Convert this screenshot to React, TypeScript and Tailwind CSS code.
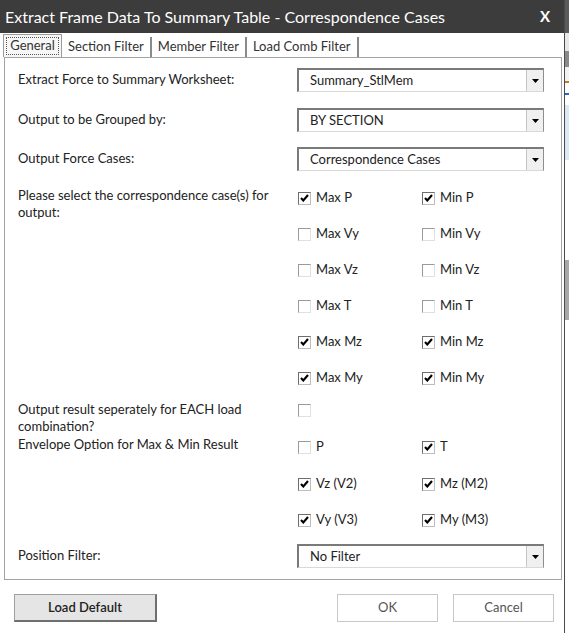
import React from "react";

const font = { fontFamily: "Lato, 'Open Sans', sans-serif" };

function Combo({ value }: { value: string }) {
  return (
    <div className="flex h-[24px] w-[247px] border border-[#8e8e8e] border-t-2 border-l-2 border-t-[#7a7a7a] border-l-[#7a7a7a] border-b-[#d9d9d9] bg-white">
      <div className="flex flex-1 items-center pl-[11px] text-[13px] text-[#222]">{value}</div>
      <div className="flex w-[17px] items-center justify-center border-l border-[#c6c6c6] bg-[#f0f0f0]">
        <svg width="7" height="4" viewBox="0 0 7 4">
          <path d="M0 0h7L3.5 4z" fill="#000" />
        </svg>
      </div>
    </div>
  );
}

function Check({ checked, label }: { checked: boolean; label?: string }) {
  return (
    <div className="flex items-center gap-[5px]">
      <div
        className={`flex h-[13px] w-[13px] items-center justify-center border bg-white ${
          checked
            ? "border-t-[#6e6e6e] border-l-[#6e6e6e] border-b-[#bdbdbd] border-r-[#bdbdbd]"
            : "border-t-[#9a9a9a] border-l-[#9a9a9a] border-b-[#e0e0e0] border-r-[#e0e0e0]"
        }`}
      >
        {checked && (
          <svg width="9" height="8" viewBox="0 0 9 8">
            <path d="M1 4l2.3 2.5L8 1" stroke="#000" strokeWidth="2.1" fill="none" />
          </svg>
        )}
      </div>
      {label && <span className="text-[13px] text-[#222]">{label}</span>}
    </div>
  );
}

function CheckRow({ a, b, h = "h-[36px]" }: { a: [boolean, string]; b: [boolean, string]; h?: string }) {
  return (
    <div className={`flex items-center ${h}`}>
      <div className="w-[125px] pl-[1px]">
        <Check checked={a[0]} label={a[1]} />
      </div>
      <Check checked={b[0]} label={b[1]} />
    </div>
  );
}

const cases: [[boolean, string], [boolean, string]][] = [
  [[true, "Max P"], [true, "Min P"]],
  [[false, "Max Vy"], [false, "Min Vy"]],
  [[false, "Max Vz"], [false, "Min Vz"]],
  [[false, "Max T"], [false, "Min T"]],
  [[true, "Max Mz"], [true, "Min Mz"]],
  [[true, "Max My"], [true, "Min My"]]
];

const tabs = ["Section Filter", "Member Filter", "Load Comb Filter"];

export default function App() {
  return (
    <div className="flex h-[633px] w-[569px] overflow-hidden bg-white" style={font}>
      <div className="flex w-[565px] flex-col border-r border-[#4a4a4a] bg-white">
        {/* title bar */}
        <div className="flex h-[33px] items-center justify-between bg-[#3c3c3c] pl-[5px] pr-[14px] text-white">
          <span className="text-[16px]">Extract Frame Data To Summary Table - Correspondence Cases</span>
          <span className="text-[15px] font-bold">X</span>
        </div>

        {/* tabs */}
        <div className="flex h-[24px] items-end pl-[3px] text-[13px] text-[#333]">
          <div className="flex h-[23px] w-[59px] items-center justify-center border border-[#9c9c9c] border-b-0 bg-[#f7f7f7] p-[2px]">
            <div className="flex h-full w-full items-center justify-center border border-dotted border-[#555]">
              General
            </div>
          </div>
          {tabs.map((t) => (
            <div key={t} className="flex h-[20px] items-center border-r-2 border-[#8a8a8a] px-[6px]">
              {t}
            </div>
          ))}
        </div>

        {/* panel */}
        <div className="ml-[4px] mr-[2px] flex h-[523px] flex-col border border-[#a3a3a3] pl-[13px] pt-[10px] text-[13px] text-[#222]">
          <div className="flex h-[24px] items-center">
            <div className="w-[279px]">Extract Force to Summary Worksheet:</div>
            <Combo value="Summary_StlMem" />
          </div>
          <div className="mt-[16px] flex h-[24px] items-center">
            <div className="w-[279px]">Output to be Grouped by:</div>
            <Combo value="BY SECTION" />
          </div>
          <div className="mt-[15px] flex h-[24px] items-center">
            <div className="w-[279px]">Output Force Cases:</div>
            <Combo value="Correspondence Cases" />
          </div>

          <div className="mt-[9px] flex">
            <div className="w-[279px] pt-[7px] leading-[17px]">
              Please select the correspondence case(s) for
              <br />
              output:
            </div>
            <div className="flex flex-col">
              {cases.map((r, i) => (
                <CheckRow key={i} a={r[0]} b={r[1]} />
              ))}
            </div>
          </div>

          <div className="mt-[5px] flex">
            <div className="w-[279px] leading-[17px]">
              Output result seperately for EACH load
              <br />
              combination?
            </div>
            <div className="flex h-[18px] items-center pl-[1px]">
              <Check checked={false} />
            </div>
          </div>

          <div className="mt-[1px] flex">
            <div className="w-[279px] leading-[17px]">Envelope Option for Max &amp; Min Result</div>
            <div className="flex flex-col">
              <div className="mt-[1px]">
                <CheckRow h="h-[20px]" a={[false, "P"]} b={[true, "T"]} />
              </div>
              <div className="mt-[9px]">
                <CheckRow a={[true, "Vz (V2)"]} b={[true, "Mz (M2)"]} />
                <CheckRow a={[true, "Vy (V3)"]} b={[true, "My (M3)"]} />
              </div>
            </div>
          </div>

          <div className="mt-[6px] flex h-[24px] items-center">
            <div className="w-[279px]">Position Filter:</div>
            <Combo value="No Filter" />
          </div>
        </div>

        {/* buttons */}
        <div className="mt-[14px] flex text-[13px] text-[#222]">
          <button className="ml-[14px] h-[28px] w-[143px] border border-[#a0a0a0] border-b-2 border-r-2 border-b-[#6f6f6f] border-r-[#6f6f6f] bg-[#e5e5e5] font-semibold">
            Load Default
          </button>
          <button className="ml-[180px] h-[28px] w-[101px] border border-[#c8c8c8] bg-white text-[#555]">
            OK
          </button>
          <button className="ml-[15px] h-[28px] w-[101px] border border-[#c8c8c8] bg-white text-[#555]">
            Cancel
          </button>
        </div>
      </div>

      {/* sliver of the sheet behind */}
      <div className="flex w-[4px] flex-col bg-white">
        <div className="h-[33px] bg-[#5a5a5a]" />
        <div className="h-[18px] bg-[#e8e8e8]" />
        <div className="h-[16px] bg-[#8a8a8a]" />
        <div className="h-[14px] bg-[#f2f2f2]" />
        <div className="h-[2px] bg-[#c07a2a]" />
        <div className="h-[10px] bg-white" />
        <div className="h-[2px] bg-[#2f5fd0]" />
        <div className="h-[10px] bg-white" />
        <div className="h-[55px] bg-[#dce8f5]" />
        <div className="h-[100px] bg-white" />
        <div className="h-[60px] bg-[#a8a8a8]" />
        <div className="flex-1 bg-white" />
      </div>
    </div>
  );
}
